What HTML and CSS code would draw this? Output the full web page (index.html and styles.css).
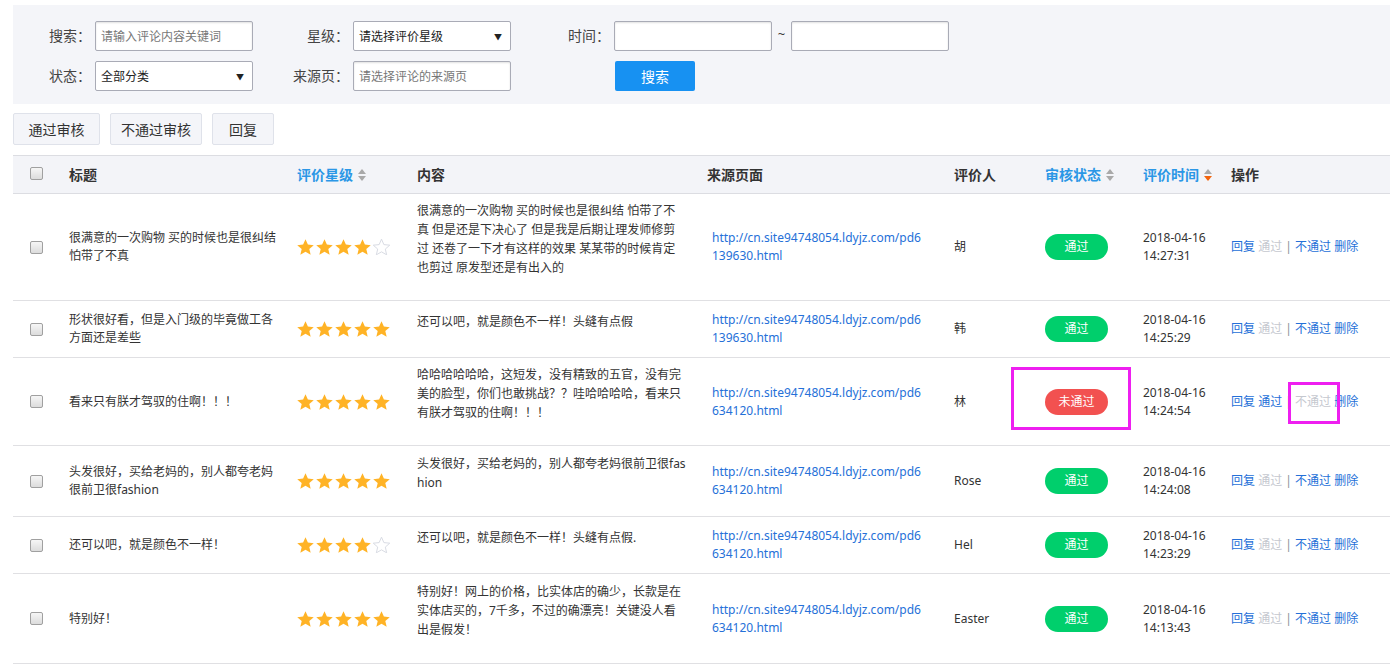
FILE: index.html
```html
<!DOCTYPE html>
<html lang="zh-CN">
<head>
<meta charset="utf-8">
<title>评论管理</title>
<link rel="stylesheet" href="styles.css">
</head>
<body>
<div class="page">
  <div class="filter">
    <label class="flabel">搜索：</label>
    <input class="finput" type="text" placeholder="请输入评论内容关键词">
    <label class="flabel">星级：</label>
    <div class="fselect"><span>请选择评价星级</span><i class="caret">▼</i></div>
    <label class="flabel">时间：</label>
    <div class="range"><input class="finput" type="text"><span class="tilde">~</span><input class="finput" type="text"></div>

    <label class="flabel">状态：</label>
    <div class="fselect"><span>全部分类</span><i class="caret">▼</i></div>
    <label class="flabel">来源页：</label>
    <input class="finput" type="text" placeholder="请选择评论的来源页">
    <span class="flabel"></span>
    <div><button class="btn-search">搜索</button></div>
  </div>

  <div class="toolbar">
    <button class="tbtn w1">通过审核</button>
    <button class="tbtn w2">不通过审核</button>
    <button class="tbtn w3">回复</button>
  </div>

  <table class="grid">
    <colgroup>
      <col class="c-chk"><col class="c-title"><col class="c-star"><col class="c-content"><col class="c-src"><col class="c-user"><col class="c-status"><col class="c-time"><col class="c-op">
    </colgroup>
    <thead>
      <tr>
        <th class="chk"><span class="cb"></span></th>
        <th>标题</th>
        <th class="sort">评价星级<span class="arrows"><i class="up"></i><i class="down"></i></span></th>
        <th>内容</th>
        <th>来源页面</th>
        <th>评价人</th>
        <th class="sort">审核状态<span class="arrows"><i class="up"></i><i class="down"></i></span></th>
        <th class="sort">评价时间<span class="arrows"><i class="up"></i><i class="down on"></i></span></th>
        <th>操作</th>
      </tr>
    </thead>
    <tbody>
      <tr>
        <td class="chk"><span class="cb"></span></td>
        <td class="title">很满意的一次购物 买的时候也是很纠结 怕带了不真</td>
        <td><span class="stars"><svg viewBox="1.4 1.6 21.2 20.2"><path class="f" d="M12 1.8l3 6.9 7.4.7-5.6 4.9 1.7 7.3L12 17.8l-6.5 3.8 1.7-7.3L1.6 9.4 9 8.7z"/></svg><svg viewBox="1.4 1.6 21.2 20.2"><path class="f" d="M12 1.8l3 6.9 7.4.7-5.6 4.9 1.7 7.3L12 17.8l-6.5 3.8 1.7-7.3L1.6 9.4 9 8.7z"/></svg><svg viewBox="1.4 1.6 21.2 20.2"><path class="f" d="M12 1.8l3 6.9 7.4.7-5.6 4.9 1.7 7.3L12 17.8l-6.5 3.8 1.7-7.3L1.6 9.4 9 8.7z"/></svg><svg viewBox="1.4 1.6 21.2 20.2"><path class="f" d="M12 1.8l3 6.9 7.4.7-5.6 4.9 1.7 7.3L12 17.8l-6.5 3.8 1.7-7.3L1.6 9.4 9 8.7z"/></svg><svg viewBox="1.4 1.6 21.2 20.2"><path class="e" d="M12 1.8l3 6.9 7.4.7-5.6 4.9 1.7 7.3L12 17.8l-6.5 3.8 1.7-7.3L1.6 9.4 9 8.7z"/></svg></span></td>
        <td class="content"><div class="ctext">很满意的一次购物 买的时候也是很纠结 怕带了不真 但是还是下决心了 但是我是后期让理发师修剪过 还卷了一下才有这样的效果 某某带的时候肯定也剪过 原发型还是有出入的</div></td>
        <td class="src"><a class="url" href="#">http://cn.site94748054.ldyjz.com/pd6139630.html</a></td>
        <td>胡</td>
        <td><span class="pill ok">通过</span></td>
        <td><div>2018-04-16</div><div>14:27:31</div></td>
        <td class="ops"><a href="#">回复</a> <span class="dis">通过</span> <span class="sep">|</span> <a href="#">不通过</a> <a href="#">删除</a></td>
      </tr>
      <tr>
        <td class="chk"><span class="cb"></span></td>
        <td class="title">形状很好看，但是入门级的毕竟做工各方面还是差些</td>
        <td><span class="stars"><svg viewBox="1.4 1.6 21.2 20.2"><path class="f" d="M12 1.8l3 6.9 7.4.7-5.6 4.9 1.7 7.3L12 17.8l-6.5 3.8 1.7-7.3L1.6 9.4 9 8.7z"/></svg><svg viewBox="1.4 1.6 21.2 20.2"><path class="f" d="M12 1.8l3 6.9 7.4.7-5.6 4.9 1.7 7.3L12 17.8l-6.5 3.8 1.7-7.3L1.6 9.4 9 8.7z"/></svg><svg viewBox="1.4 1.6 21.2 20.2"><path class="f" d="M12 1.8l3 6.9 7.4.7-5.6 4.9 1.7 7.3L12 17.8l-6.5 3.8 1.7-7.3L1.6 9.4 9 8.7z"/></svg><svg viewBox="1.4 1.6 21.2 20.2"><path class="f" d="M12 1.8l3 6.9 7.4.7-5.6 4.9 1.7 7.3L12 17.8l-6.5 3.8 1.7-7.3L1.6 9.4 9 8.7z"/></svg><svg viewBox="1.4 1.6 21.2 20.2"><path class="f" d="M12 1.8l3 6.9 7.4.7-5.6 4.9 1.7 7.3L12 17.8l-6.5 3.8 1.7-7.3L1.6 9.4 9 8.7z"/></svg></span></td>
        <td class="content"><div class="ctext">还可以吧，就是颜色不一样！头缝有点假</div></td>
        <td class="src"><a class="url" href="#">http://cn.site94748054.ldyjz.com/pd6139630.html</a></td>
        <td>韩</td>
        <td><span class="pill ok">通过</span></td>
        <td><div>2018-04-16</div><div>14:25:29</div></td>
        <td class="ops"><a href="#">回复</a> <span class="dis">通过</span> <span class="sep">|</span> <a href="#">不通过</a> <a href="#">删除</a></td>
      </tr>
      <tr>
        <td class="chk"><span class="cb"></span></td>
        <td class="title">看来只有朕才驾驭的住啊！！！</td>
        <td><span class="stars"><svg viewBox="1.4 1.6 21.2 20.2"><path class="f" d="M12 1.8l3 6.9 7.4.7-5.6 4.9 1.7 7.3L12 17.8l-6.5 3.8 1.7-7.3L1.6 9.4 9 8.7z"/></svg><svg viewBox="1.4 1.6 21.2 20.2"><path class="f" d="M12 1.8l3 6.9 7.4.7-5.6 4.9 1.7 7.3L12 17.8l-6.5 3.8 1.7-7.3L1.6 9.4 9 8.7z"/></svg><svg viewBox="1.4 1.6 21.2 20.2"><path class="f" d="M12 1.8l3 6.9 7.4.7-5.6 4.9 1.7 7.3L12 17.8l-6.5 3.8 1.7-7.3L1.6 9.4 9 8.7z"/></svg><svg viewBox="1.4 1.6 21.2 20.2"><path class="f" d="M12 1.8l3 6.9 7.4.7-5.6 4.9 1.7 7.3L12 17.8l-6.5 3.8 1.7-7.3L1.6 9.4 9 8.7z"/></svg><svg viewBox="1.4 1.6 21.2 20.2"><path class="f" d="M12 1.8l3 6.9 7.4.7-5.6 4.9 1.7 7.3L12 17.8l-6.5 3.8 1.7-7.3L1.6 9.4 9 8.7z"/></svg></span></td>
        <td class="content"><div class="ctext">哈哈哈哈哈哈，这短发，没有精致的五官，没有完美的脸型，你们也敢挑战？？哇哈哈哈哈，看来只有朕才驾驭的住啊！！！</div></td>
        <td class="src"><a class="url" href="#">http://cn.site94748054.ldyjz.com/pd6634120.html</a></td>
        <td>林</td>
        <td><span class="pill no">未通过</span></td>
        <td><div>2018-04-16</div><div>14:24:54</div></td>
        <td class="ops"><a href="#">回复</a> <a href="#">通过</a> <span class="sep">|</span> <span class="dis">不通过</span> <a href="#">删除</a></td>
      </tr>
      <tr class="r4">
        <td class="chk"><span class="cb"></span></td>
        <td class="title">头发很好，买给老妈的，别人都夸老妈很前卫很fashion</td>
        <td><span class="stars"><svg viewBox="1.4 1.6 21.2 20.2"><path class="f" d="M12 1.8l3 6.9 7.4.7-5.6 4.9 1.7 7.3L12 17.8l-6.5 3.8 1.7-7.3L1.6 9.4 9 8.7z"/></svg><svg viewBox="1.4 1.6 21.2 20.2"><path class="f" d="M12 1.8l3 6.9 7.4.7-5.6 4.9 1.7 7.3L12 17.8l-6.5 3.8 1.7-7.3L1.6 9.4 9 8.7z"/></svg><svg viewBox="1.4 1.6 21.2 20.2"><path class="f" d="M12 1.8l3 6.9 7.4.7-5.6 4.9 1.7 7.3L12 17.8l-6.5 3.8 1.7-7.3L1.6 9.4 9 8.7z"/></svg><svg viewBox="1.4 1.6 21.2 20.2"><path class="f" d="M12 1.8l3 6.9 7.4.7-5.6 4.9 1.7 7.3L12 17.8l-6.5 3.8 1.7-7.3L1.6 9.4 9 8.7z"/></svg><svg viewBox="1.4 1.6 21.2 20.2"><path class="f" d="M12 1.8l3 6.9 7.4.7-5.6 4.9 1.7 7.3L12 17.8l-6.5 3.8 1.7-7.3L1.6 9.4 9 8.7z"/></svg></span></td>
        <td class="content"><div class="ctext">头发很好，买给老妈的，别人都夸老妈很前卫很fashion</div></td>
        <td class="src"><a class="url" href="#">http://cn.site94748054.ldyjz.com/pd6634120.html</a></td>
        <td>Rose</td>
        <td><span class="pill ok">通过</span></td>
        <td><div>2018-04-16</div><div>14:24:08</div></td>
        <td class="ops"><a href="#">回复</a> <span class="dis">通过</span> <span class="sep">|</span> <a href="#">不通过</a> <a href="#">删除</a></td>
      </tr>
      <tr>
        <td class="chk"><span class="cb"></span></td>
        <td class="title">还可以吧，就是颜色不一样！</td>
        <td><span class="stars"><svg viewBox="1.4 1.6 21.2 20.2"><path class="f" d="M12 1.8l3 6.9 7.4.7-5.6 4.9 1.7 7.3L12 17.8l-6.5 3.8 1.7-7.3L1.6 9.4 9 8.7z"/></svg><svg viewBox="1.4 1.6 21.2 20.2"><path class="f" d="M12 1.8l3 6.9 7.4.7-5.6 4.9 1.7 7.3L12 17.8l-6.5 3.8 1.7-7.3L1.6 9.4 9 8.7z"/></svg><svg viewBox="1.4 1.6 21.2 20.2"><path class="f" d="M12 1.8l3 6.9 7.4.7-5.6 4.9 1.7 7.3L12 17.8l-6.5 3.8 1.7-7.3L1.6 9.4 9 8.7z"/></svg><svg viewBox="1.4 1.6 21.2 20.2"><path class="f" d="M12 1.8l3 6.9 7.4.7-5.6 4.9 1.7 7.3L12 17.8l-6.5 3.8 1.7-7.3L1.6 9.4 9 8.7z"/></svg><svg viewBox="1.4 1.6 21.2 20.2"><path class="e" d="M12 1.8l3 6.9 7.4.7-5.6 4.9 1.7 7.3L12 17.8l-6.5 3.8 1.7-7.3L1.6 9.4 9 8.7z"/></svg></span></td>
        <td class="content"><div class="ctext">还可以吧，就是颜色不一样！头缝有点假.</div></td>
        <td class="src"><a class="url" href="#">http://cn.site94748054.ldyjz.com/pd6634120.html</a></td>
        <td>Hel</td>
        <td><span class="pill ok">通过</span></td>
        <td><div>2018-04-16</div><div>14:23:29</div></td>
        <td class="ops"><a href="#">回复</a> <span class="dis">通过</span> <span class="sep">|</span> <a href="#">不通过</a> <a href="#">删除</a></td>
      </tr>
      <tr class="r6">
        <td class="chk"><span class="cb"></span></td>
        <td class="title">特别好！</td>
        <td><span class="stars"><svg viewBox="1.4 1.6 21.2 20.2"><path class="f" d="M12 1.8l3 6.9 7.4.7-5.6 4.9 1.7 7.3L12 17.8l-6.5 3.8 1.7-7.3L1.6 9.4 9 8.7z"/></svg><svg viewBox="1.4 1.6 21.2 20.2"><path class="f" d="M12 1.8l3 6.9 7.4.7-5.6 4.9 1.7 7.3L12 17.8l-6.5 3.8 1.7-7.3L1.6 9.4 9 8.7z"/></svg><svg viewBox="1.4 1.6 21.2 20.2"><path class="f" d="M12 1.8l3 6.9 7.4.7-5.6 4.9 1.7 7.3L12 17.8l-6.5 3.8 1.7-7.3L1.6 9.4 9 8.7z"/></svg><svg viewBox="1.4 1.6 21.2 20.2"><path class="f" d="M12 1.8l3 6.9 7.4.7-5.6 4.9 1.7 7.3L12 17.8l-6.5 3.8 1.7-7.3L1.6 9.4 9 8.7z"/></svg><svg viewBox="1.4 1.6 21.2 20.2"><path class="f" d="M12 1.8l3 6.9 7.4.7-5.6 4.9 1.7 7.3L12 17.8l-6.5 3.8 1.7-7.3L1.6 9.4 9 8.7z"/></svg></span></td>
        <td class="content"><div class="ctext">特别好！网上的价格，比实体店的确少，长款是在实体店买的，7千多，不过的确漂亮！关键没人看出是假发！</div></td>
        <td class="src"><a class="url" href="#">http://cn.site94748054.ldyjz.com/pd6634120.html</a></td>
        <td>Easter</td>
        <td><span class="pill ok">通过</span></td>
        <td><div>2018-04-16</div><div>14:13:43</div></td>
        <td class="ops"><a href="#">回复</a> <span class="dis">通过</span> <span class="sep">|</span> <a href="#">不通过</a> <a href="#">删除</a></td>
      </tr>
    </tbody>
  </table>

  <div class="mark mark-status"></div>
  <div class="mark mark-op"></div>
</div>
</body>
</html>
```

FILE: styles.css
```css
* { box-sizing: border-box; }
html, body { margin: 0; padding: 0; background: #fff; }
body {
  font-family: "Noto Sans", "Noto Sans CJK SC", sans-serif;
  font-size: 12px;
  color: #333;
}
.page {
  position: relative;
  padding: 5px 5px 0 13px;
  width: 1395px;
}

/* filter panel */
.filter {
  background: #f4f5f9;
  height: 99px;
  padding-top: 16px;
  display: grid;
  grid-template-columns: 82px 158px 100px 158px 103px auto;
  grid-auto-rows: 30px;
  row-gap: 10px;
  align-items: center;
}
.flabel {
  font-size: 14px;
  color: #444;
  text-align: right;
  white-space: nowrap;
  line-height: 30px;
  padding-right: 4px;
}
.finput {
  width: 158px;
  height: 30px;
  border: 1px solid #a9abb6;
  border-radius: 2px;
  box-shadow: inset 0 1px 2px rgba(0,0,0,0.12);
  background: #fff;
  padding: 0 5px;
  font-family: inherit;
  font-size: 12px;
  color: #333;
  outline: none;
}
.finput::placeholder { color: #777; }
.fselect {
  width: 158px;
  height: 30px;
  border: 1px solid #a9abb6;
  border-radius: 2px;
  background: #fff;
  display: flex;
  align-items: center;
  justify-content: space-between;
  padding: 0 8px 0 5px;
  font-size: 12px;
  color: #222;
}
.caret {
  font-style: normal;
  font-size: 8px;
  color: #222;
}
.range { display: flex; align-items: center; }
.tilde {
  width: 19px;
  text-align: center;
  font-size: 13px;
  color: #333;
  padding-bottom: 5px;
}
.btn-search {
  margin-left: 1px;
  width: 80px;
  height: 30px;
  border: 0;
  border-radius: 2px;
  background: #1791f2;
  color: #fff;
  font-family: inherit;
  font-size: 14px;
}

/* toolbar */
.toolbar {
  display: flex;
  gap: 10px;
  margin-top: 9px;
  height: 32px;
}
.tbtn {
  height: 32px;
  border: 1px solid #dfe2ea;
  border-radius: 2px;
  background: #f4f5f9;
  color: #333;
  font-family: inherit;
  font-size: 14px;
  padding: 0;
}
.w1 { width: 87px; }
.w2 { width: 92px; }
.w3 { width: 62px; }

/* table */
.grid {
  margin-top: 10px;
  width: 1377px;
  table-layout: fixed;
  border-collapse: collapse;
  border-top: 1px solid #dcdde2;
}
.c-chk { width: 44px; }
.c-title { width: 228px; }
.c-star { width: 120px; }
.c-content { width: 290px; }
.c-src { width: 247px; }
.c-user { width: 91px; }
.c-status { width: 98px; }
.c-time { width: 88px; }
.c-op { width: 171px; }

.grid th {
  background: #f3f4f8;
  height: 38px;
  border-bottom: 1px solid #dcdde2;
  text-align: left;
  font-size: 14px;
  font-weight: bold;
  color: #333;
  padding: 0 12px 2px;
  white-space: nowrap;
}
.grid th.sort { color: #2b97e6; }
.arrows {
  display: inline-flex;
  flex-direction: column;
  gap: 2px;
  margin-left: 5px;
  vertical-align: middle;
  position: relative;
  top: -1px;
}
.arrows i {
  width: 0; height: 0;
  border-left: 4px solid transparent;
  border-right: 4px solid transparent;
}
.arrows .up { border-bottom: 5px solid #a9a9a9; }
.arrows .down { border-top: 5px solid #a9a9a9; }
.arrows .down.on { border-top-color: #f4640c; }

.grid td {
  border-bottom: 1px solid #e0e0e3;
  padding: 10px 12px;
  line-height: 18px;
  vertical-align: middle;
  color: #333;
}
.grid .chk { padding: 0 0 0 17px; }
.grid th.chk { padding: 0 0 2px 17px; }
.cb {
  display: block;
  width: 13px;
  height: 13px;
  border: 1px solid #a0a0a0;
  border-radius: 2px;
  background: linear-gradient(#f6f6f6, #dcdcdc);
}
.grid td.title { padding-right: 6px; }
.grid td.content { padding: 7px 12px 23px; }
.ctext {
  width: 269px;
  line-height: 19px;
  word-break: break-all;
}
.r4 td.content { padding: 8px 12px 24px; }
.r6 td.content { padding: 8px 12px 24px; }
.grid td.src { padding-left: 17px; padding-right: 12px; }
.url {
  display: block;
  width: 213px;
  color: #2570d8;
  text-decoration: none;
  word-break: break-all;
}

.stars { display: flex; gap: 2px; }
.stars svg { width: 17px; height: 16px; display: block; }
.stars .f { fill: #ffb326; }
.stars .e { fill: #fff; stroke: #d6d9e2; stroke-width: 1.2; }

.pill {
  display: inline-block;
  width: 63px;
  height: 26px;
  line-height: 26px;
  border-radius: 13px;
  text-align: center;
  color: #fff;
  font-size: 12px;
}
.pill.ok { background: #00cf6c; }
.pill.no { background: #f25150; }

.ops { white-space: nowrap; }
.ops a { color: #2570d8; text-decoration: none; }
.ops .dis { color: #c5c8cf; }
.ops .sep { color: #8a8f9a; }

/* annotation boxes */
.mark {
  position: absolute;
  border: 3px solid #ee1ff0;
  pointer-events: none;
}
.mark-status { left: 1011px; top: 367px; width: 120px; height: 63px; }
.mark-op { left: 1288px; top: 382px; width: 52px; height: 42px; }
```
